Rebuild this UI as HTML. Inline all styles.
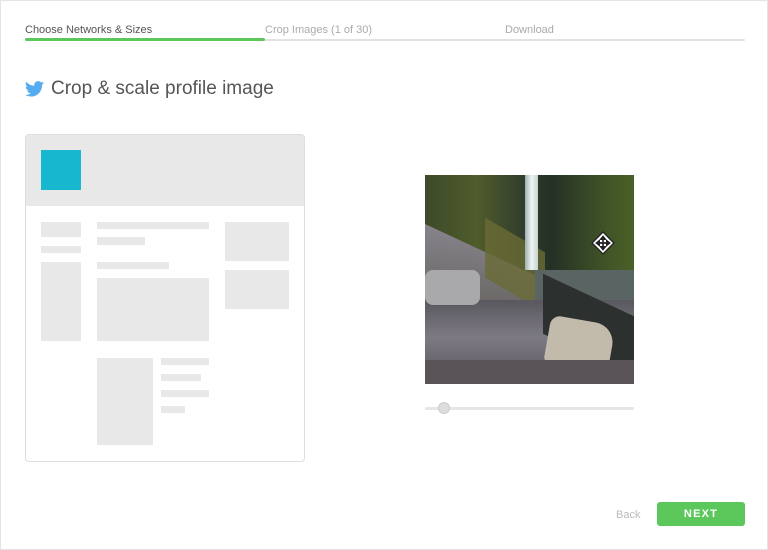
<!DOCTYPE html>
<html><head><style>
*{margin:0;padding:0;box-sizing:border-box}
body{width:768px;height:550px;background:#fff;font-family:"Liberation Sans",sans-serif;position:relative;overflow:hidden;box-shadow:inset 0 0 0 1px #e4e4e4}
.a{position:absolute}
.g{position:absolute;background:#e8e8e8}
</style></head><body>
<div class="a" style="left:25px;top:24px;font-size:11px;color:#555">Choose Networks &amp; Sizes</div>
<div class="a" style="left:265px;top:24px;font-size:11px;color:#aaa">Crop Images (1 of 30)</div>
<div class="a" style="left:505px;top:24px;font-size:11px;color:#aaa">Download</div>
<div class="a" style="left:25px;top:39px;width:720px;height:2px;background:#e2e2e2;border-radius:1px"></div>
<div class="a" style="left:25px;top:38px;width:240px;height:3px;background:#5cc85c;border-radius:2px"></div>
<svg class="a" style="left:25px;top:81px" width="19" height="16" viewBox="0 0 24 20"><path fill="#55acee" d="M24 2.4c-.9.4-1.8.7-2.8.8 1-.6 1.8-1.6 2.2-2.7-1 .6-2 1-3.1 1.2C19.3.7 18 0 16.6 0c-2.7 0-4.9 2.2-4.9 4.9 0 .4 0 .8.1 1.1C7.7 5.8 4.1 3.9 1.7.9c-.4.7-.7 1.6-.7 2.5 0 1.7.9 3.2 2.2 4.1-.8 0-1.6-.2-2.2-.6v.1c0 2.4 1.7 4.4 3.9 4.8-.4.1-.8.2-1.3.2-.3 0-.6 0-.9-.1.6 2 2.4 3.4 4.6 3.4-1.7 1.3-3.8 2.1-6.1 2.1-.4 0-.8 0-1.2-.1 2.2 1.4 4.8 2.2 7.5 2.2 9.1 0 14-7.5 14-14v-.6c1-.7 1.8-1.6 2.5-2.5z"/></svg>
<div class="a" style="left:51px;top:78px;font-size:19px;color:#555">Crop &amp; scale profile image</div>
<div class="a" style="left:25px;top:134px;width:280px;height:328px;border:1px solid #ddd;border-radius:4px;overflow:hidden">
<div class="a" style="left:0;top:0;width:280px;height:71px;background:#e8e8e8"></div>
<div class="a" style="left:15px;top:15px;width:40px;height:40px;background:#17b7cf"></div>
</div>
<div class="g" style="left:41px;top:222px;width:40px;height:15px"></div>
<div class="g" style="left:41px;top:246px;width:40px;height:7px"></div>
<div class="g" style="left:41px;top:262px;width:40px;height:79px"></div>
<div class="g" style="left:97px;top:222px;width:112px;height:7px"></div>
<div class="g" style="left:97px;top:237px;width:48px;height:8px"></div>
<div class="g" style="left:97px;top:262px;width:72px;height:7px"></div>
<div class="g" style="left:97px;top:278px;width:112px;height:63px"></div>
<div class="g" style="left:225px;top:222px;width:64px;height:39px"></div>
<div class="g" style="left:225px;top:270px;width:64px;height:39px"></div>
<div class="g" style="left:97px;top:358px;width:56px;height:87px"></div>
<div class="g" style="left:161px;top:358px;width:48px;height:7px"></div>
<div class="g" style="left:161px;top:374px;width:40px;height:7px"></div>
<div class="g" style="left:161px;top:390px;width:48px;height:7px"></div>
<div class="g" style="left:161px;top:406px;width:24px;height:7px"></div>
<div class="a" style="left:425px;top:175px;width:209px;height:209px;overflow:hidden;background:#4e5452">
<div class="a" style="left:0;top:0;width:209px;height:110px;background:linear-gradient(90deg,#3d4a28,#4f5c2c 25%,#34402c 45%,#243026 60%,#3e5226 85%,#4a6028)"></div>
<div class="a" style="left:-20px;top:70px;width:130px;height:70px;background:linear-gradient(160deg,#8a8690,#5c5a52);transform:skewY(25deg)"></div>
<div class="a" style="left:60px;top:60px;width:60px;height:60px;background:#6a6b36;transform:skewY(30deg);opacity:.8"></div>
<div class="a" style="left:100px;top:0;width:13px;height:95px;background:linear-gradient(90deg,#9fb0b0,#eef4f4,#c7d3d2)"></div>
<div class="a" style="left:110px;top:95px;width:99px;height:30px;background:#5a6462"></div>
<div class="a" style="left:0;top:125px;width:209px;height:84px;background:linear-gradient(180deg,#5a585e,#7d7a84 45%,#56545a)"></div>
<div class="a" style="left:118px;top:120px;width:91px;height:60px;background:#2c302e;transform:skewY(25deg)"></div>
<div class="a" style="left:122px;top:145px;width:65px;height:48px;background:#c2bbac;border-radius:10px 20px 6px 6px;transform:rotate(10deg)"></div>
<div class="a" style="left:0;top:95px;width:55px;height:35px;background:#a9a8ab;border-radius:8px"></div>
<div class="a" style="left:0;top:185px;width:209px;height:24px;background:#5a5458"></div>
<svg class="a" style="left:166px;top:56px" width="24" height="24" viewBox="0 0 22 22"><path d="M11 1L21 11 11 21 1 11z" fill="#fff" stroke="#222" stroke-width="1.2"/><path d="M11 5v12M5 11h12M11 5l-2 2.5h4zM11 17l-2-2.5h4zM5 11l2.5-2v4zM17 11l-2.5-2v4z" fill="#222" stroke="#222" stroke-width="1.5"/></svg>
</div>
<div class="a" style="left:425px;top:407px;width:209px;height:3px;background:#e6e6e6;border-radius:2px"></div>
<div class="a" style="left:438px;top:402px;width:12px;height:12px;background:#ddd;border:1px solid #ccc;border-radius:50%"></div>
<div class="a" style="left:616px;top:509px;font-size:11px;color:#bbb">Back</div>
<div class="a" style="left:657px;top:502px;width:88px;height:24px;background:#5cc85c;border-radius:3px;color:#fff;font-weight:bold;font-size:11px;letter-spacing:1.2px;text-align:center;line-height:24px">NEXT</div>
</body></html>
